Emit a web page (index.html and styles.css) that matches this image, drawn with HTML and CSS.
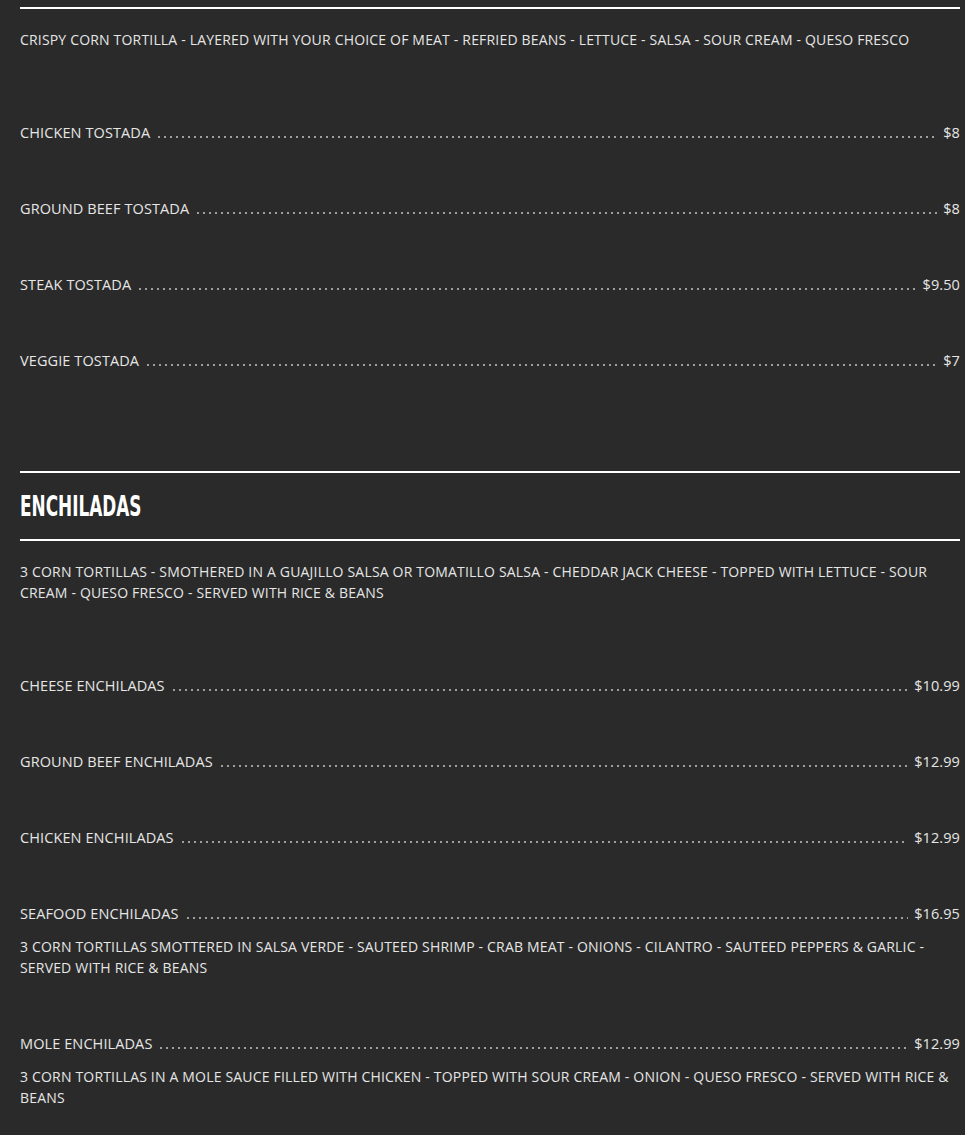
FILE: index.html
```html
<!DOCTYPE html>
<html lang="en">
<head>
    <meta charset="UTF-8">
    <meta name="viewport" content="width=device-width, initial-scale=1.0">
    <title>Menu</title>
    <link rel="stylesheet" href="styles.css">
</head>
<body>
    <div class="menu">
        <section class="menu-section">
            <hr class="rule">
            <p class="section-desc">CRISPY CORN TORTILLA - LAYERED WITH YOUR CHOICE OF MEAT - REFRIED BEANS - LETTUCE - SALSA - SOUR CREAM - QUESO FRESCO</p>
            <div class="item">
                <div class="item-row"><span class="item-name">CHICKEN TOSTADA</span><span class="leader"></span><span class="item-price">$8</span></div>
            </div>
            <div class="item">
                <div class="item-row"><span class="item-name">GROUND BEEF TOSTADA</span><span class="leader"></span><span class="item-price">$8</span></div>
            </div>
            <div class="item">
                <div class="item-row"><span class="item-name">STEAK TOSTADA</span><span class="leader"></span><span class="item-price">$9.50</span></div>
            </div>
            <div class="item">
                <div class="item-row"><span class="item-name">VEGGIE TOSTADA</span><span class="leader"></span><span class="item-price">$7</span></div>
            </div>
        </section>

        <section class="menu-section">
            <hr class="rule">
            <h2 class="section-title"><span>ENCHILADAS</span></h2>
            <hr class="rule">
            <p class="section-desc">3 CORN TORTILLAS - SMOTHERED IN A GUAJILLO SALSA OR TOMATILLO SALSA - CHEDDAR JACK CHEESE - TOPPED WITH LETTUCE - SOUR CREAM - QUESO FRESCO - SERVED WITH RICE &amp; BEANS</p>
            <div class="item">
                <div class="item-row"><span class="item-name">CHEESE ENCHILADAS</span><span class="leader"></span><span class="item-price">$10.99</span></div>
            </div>
            <div class="item">
                <div class="item-row"><span class="item-name">GROUND BEEF ENCHILADAS</span><span class="leader"></span><span class="item-price">$12.99</span></div>
            </div>
            <div class="item">
                <div class="item-row"><span class="item-name">CHICKEN ENCHILADAS</span><span class="leader"></span><span class="item-price">$12.99</span></div>
            </div>
            <div class="item">
                <div class="item-row"><span class="item-name">SEAFOOD ENCHILADAS</span><span class="leader"></span><span class="item-price">$16.95</span></div>
                <p class="item-desc">3 CORN TORTILLAS SMOTTERED IN SALSA VERDE - SAUTEED SHRIMP - CRAB MEAT - ONIONS - CILANTRO - SAUTEED PEPPERS &amp; GARLIC - SERVED WITH RICE &amp; BEANS</p>
            </div>
            <div class="item">
                <div class="item-row"><span class="item-name">MOLE ENCHILADAS</span><span class="leader"></span><span class="item-price">$12.99</span></div>
                <p class="item-desc">3 CORN TORTILLAS IN A MOLE SAUCE FILLED WITH CHICKEN - TOPPED WITH SOUR CREAM - ONION - QUESO FRESCO - SERVED WITH RICE &amp; BEANS</p>
            </div>
        </section>
    </div>
</body>
</html>
```

FILE: styles.css
```css
body {
    margin: 0;
    background-color: #2a2a2a;
    color: #e6e6e6;
    font-family: "Open Sans", "Liberation Sans", sans-serif;
    font-size: 14px;
    line-height: 21px;
    letter-spacing: 0.18px;
}
.menu {
    width: 940px;
    margin-left: 20px;
    padding-top: 7px;
}
.menu-section {
    padding-bottom: 45px;
}
.rule {
    margin: 0;
    border: none;
    height: 2px;
    background-color: #fff;
}
.section-title {
    margin: 0;
    height: 66px;
    display: flex;
    align-items: center;
    color: #fff;
    font-family: "DejaVu Sans", sans-serif;
    font-stretch: condensed;
    font-weight: bold;
    font-size: 28px;
    letter-spacing: 0;
}
.section-title span {
    display: inline-block;
    transform: scaleX(0.67);
    transform-origin: left center;
}
.section-desc {
    margin: 20px 0 72px;
}
.item {
    margin-bottom: 55px;
}
.item-row {
    display: flex;
    align-items: baseline;
    font-size: 14.5px;
    letter-spacing: 0.1px;
}
.item-name,
.item-price {
    white-space: nowrap;
}
.leader {
    flex: 1;
    margin: 0 6px;
    height: 2px;
    background-image: radial-gradient(circle, #a0a0a0 0.7px, transparent 1.1px);
    background-size: 6px 2px;
    background-repeat: repeat-x;
}
.item-desc {
    margin: 12px 0 0;
}
```
